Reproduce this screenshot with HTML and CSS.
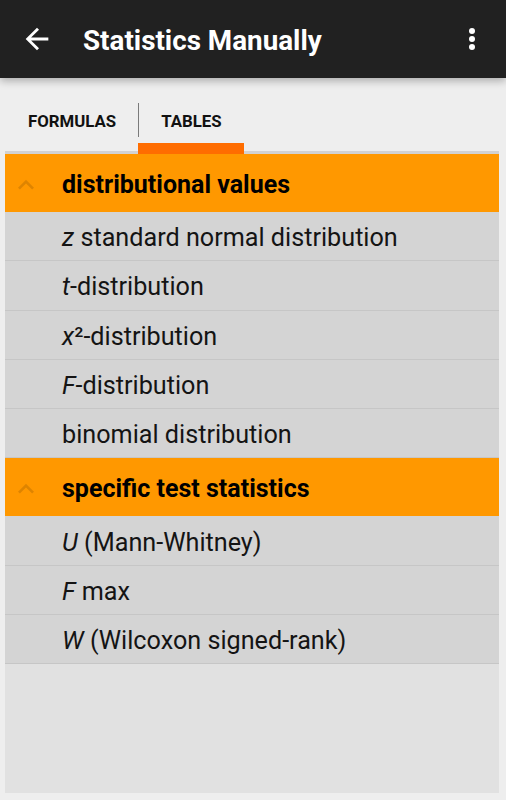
FILE: index.html
```html
<!DOCTYPE html>
<html>
<head>
<meta charset="utf-8">
<link rel="stylesheet" href="styles.css">
</head>
<body>
<header class="appbar">
  <svg class="back" viewBox="0 0 24 24"><path d="M20 11H7.83l5.59-5.59L12 4l-8 8 8 8 1.41-1.41L7.83 13H20v-2z" fill="#fff"/></svg>
  <h1 class="title">Statistics Manually</h1>
  <div class="more"><span></span><span></span><span></span></div>
</header>
<nav class="tabs">
  <div class="tab">FORMULAS</div>
  <div class="divider"></div>
  <div class="tab active">TABLES</div>
</nav>
<main class="panel">
  <div class="group-head">
    <svg class="chev" viewBox="0 0 24 24"><path d="M12 8l-6 6 1.41 1.41L12 10.83l4.59 4.58L18 14z"/></svg>
    <span>distributional values</span>
  </div>
  <div class="item"><i>z</i> standard normal distribution</div>
  <div class="item"><i>t</i>-distribution</div>
  <div class="item"><i>x</i>²-distribution</div>
  <div class="item"><i>F</i>-distribution</div>
  <div class="item">binomial distribution</div>
  <div class="group-head">
    <svg class="chev" viewBox="0 0 24 24"><path d="M12 8l-6 6 1.41 1.41L12 10.83l4.59 4.58L18 14z"/></svg>
    <span>specific test statistics</span>
  </div>
  <div class="item"><i>U</i> (Mann-Whitney)</div>
  <div class="item"><i>F</i> max</div>
  <div class="item"><i>W</i> (Wilcoxon signed-rank)</div>
</main>
</body>
</html>
```
FILE: styles.css
```css
html, body {
  margin: 0;
  padding: 0;
}
body {
  background: #eeeeee;
  font-family: Roboto, "Liberation Sans", sans-serif;
  width: 506px;
  height: 800px;
  display: flex;
  flex-direction: column;
  overflow: hidden;
}
.appbar {
  height: 78px;
  background: #212121;
  display: flex;
  align-items: center;
  box-shadow: 0 3px 8px rgba(0,0,0,0.28);
  position: relative;
  z-index: 2;
  flex: none;
}
.back {
  width: 34px;
  height: 34px;
  margin-left: 20px;
  flex: none;
}
.title {
  margin: 3px 0 0 29px;
  color: #fff;
  font-size: 27.8px;
  font-weight: 700;
  flex: 1;
  letter-spacing: 0;
}
.more {
  display: flex;
  flex-direction: column;
  gap: 1.6px;
  margin-right: 31px;
}
.more span {
  width: 6.5px;
  height: 6.5px;
  border-radius: 50%;
  background: #fff;
}
.tabs {
  display: flex;
  height: 76px;
  margin: 0 7px 0 5px;
  box-shadow: inset 0 -3px 0 #d2d2d2;
  flex: none;
}
.tab {
  box-sizing: border-box;
  padding: 33px 22px 0 23px;
  line-height: 20px;
  font-size: 16.8px;
  font-weight: 700;
  color: #111;
  border-bottom: 11px solid transparent;
}
.tab.active {
  border-bottom-color: #ff6d00;
  margin-left: -1px;
  padding-left: 23px;
}
.divider {
  width: 1px;
  height: 34px;
  margin-top: 25px;
  background: #7a7a7a;
  position: relative;
  z-index: 1;
}
.panel {
  flex: 1;
  margin: 0 7px 7px 5px;
  background: #e1e1e1;
}
.group-head {
  height: 58px;
  background: #ff9800;
  display: flex;
  align-items: center;
  box-sizing: border-box;
}
.chev {
  width: 32px;
  height: 32px;
  margin-left: 5px;
  margin-right: 20px;
  margin-top: 4px;
  fill: rgba(0,0,0,0.13);
  flex: none;
}
.group-head span {
  font-size: 25px;
  font-weight: 700;
  color: #000;
  margin-top: 2px;
}
.item {
  box-sizing: border-box;
  height: 49.3px;
  background: #d4d4d4;
  border-bottom: 1px solid #c6c6c6;
  display: flex;
  align-items: center;
  padding-left: 57px;
  padding-top: 3px;
  font-size: 25.2px;
  color: #141414;
  white-space: pre;
}
.item i {
  font-style: italic;
}
```
